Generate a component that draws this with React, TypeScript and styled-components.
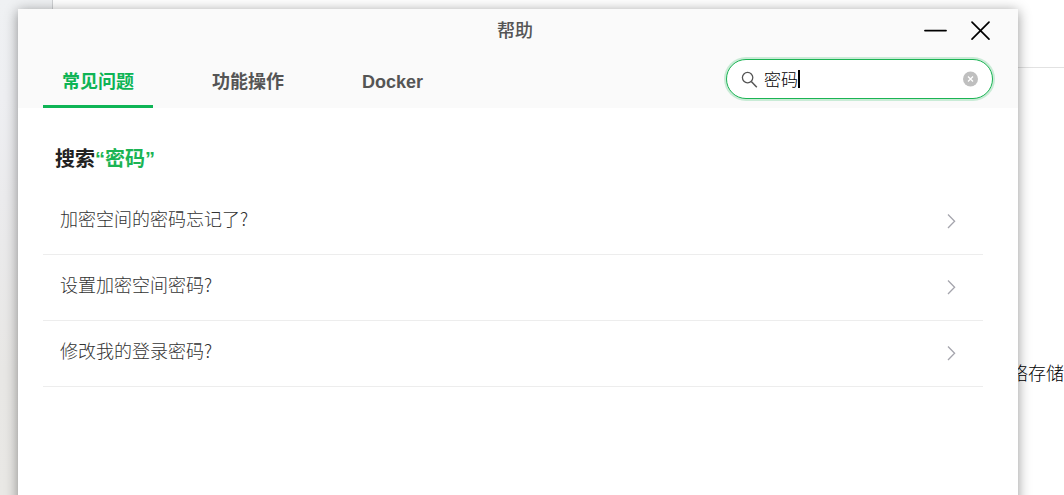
import React, { useState } from "react";
import styled, { createGlobalStyle } from "styled-components";

const GlobalStyle = createGlobalStyle`
  * { box-sizing: border-box; }
  body {
    margin: 0;
    overflow: hidden;
    font-family: "Liberation Sans", "Noto Sans CJK SC", sans-serif;
    font-size: 18px;
    line-height: 24px;
  }
  button, input { font: inherit; }
  button { padding: 0; border: 0; background: none; cursor: pointer; }
`;

const Desktop = styled.div`
  position: relative;
  display: flex;
  min-height: 100vh;
  overflow: hidden;
  background: #fff;
`;

const Dock = styled.aside`
  flex: none;
  width: 53px;
  border-right: 1px solid #cfd1d3;
  background: linear-gradient(#eff1f3, #eeeff2 20%, #ebebed 40%, #e8e7e5 75%, #e9e8e5);
`;

const Backdrop = styled.main`
  flex: 1;
  display: flex;
  flex-direction: column;
`;

const BackdropHeader = styled.header`
  height: 68px;
  border-bottom: 1px solid #e2e2e2;
`;

const BackdropText = styled.p`
  margin: 292px 0 0;
  text-align: right;
  font-family: "Noto Sans CJK SC", sans-serif;
  font-weight: 300;
  color: #000;
`;

const Dialog = styled.section`
  position: absolute;
  top: 9px;
  right: 46px;
  bottom: -20px;
  left: 18px;
  background: #fff;
  box-shadow: 0 2px 12px rgba(0, 0, 0, 0.42);
`;

const DialogHeader = styled.header`
  background: #fafafa;
`;

const TitleBar = styled.div`
  display: grid;
  grid-template-columns: 1fr auto 1fr;
  align-items: center;
  height: 44px;
  padding: 0 26px 0 20px;
`;

const Title = styled.h1`
  grid-column: 2;
  margin: 0;
  font-size: 18px;
  font-weight: 500;
  color: #555;
`;

const WindowControls = styled.div`
  display: flex;
  justify-content: flex-end;
  gap: 21px;
`;

const ControlButton = styled.button`
  display: flex;
  width: 24px;
  height: 24px;
  color: #000;
`;

const NavRow = styled.div`
  display: flex;
  justify-content: space-between;
  height: 55px;
  padding: 0 25px;
`;

const Tabs = styled.nav`
  display: flex;
  gap: 40px;
`;

const Tab = styled.button<{ $active: boolean }>`
  padding: 2px 19px 0;
  border-top: 3px solid transparent;
  border-bottom: 3px solid ${(p) => (p.$active ? "#0eb455" : "transparent")};
  font-weight: ${(p) => (p.$active ? 700 : 600)};
  color: ${(p) => (p.$active ? "#0eb455" : "#555")};
`;

const SearchBox = styled.label`
  display: flex;
  align-items: center;
  width: 267px;
  height: 40px;
  margin-top: 6px;
  padding: 0 14px;
  border: 1px solid #1bb454;
  border-radius: 20px;
  background: #fff;
  box-shadow: 0 0 0 2px #c9ebd6;
`;

const SearchInput = styled.input`
  field-sizing: content;
  max-width: 180px;
  margin-left: 6px;
  padding: 0;
  border: 0;
  outline: 0;
  background: none;
  font-family: "Noto Sans CJK SC", sans-serif;
  font-size: 17px;
  font-weight: 300;
  color: #000;
  caret-color: transparent;
`;

const Caret = styled.span`
  width: 2px;
  height: 18px;
  background: #000;
`;

const ClearButton = styled.button`
  display: flex;
  margin-left: auto;
`;

const Content = styled.div`
  padding: 38px 35px 24px 25px;
`;

const ResultTitle = styled.h2`
  margin: 0 0 17px 12px;
  font-size: 20px;
  line-height: 26px;
  font-weight: 700;
  color: #222;
`;

const Keyword = styled.span`
  color: #1bb454;
`;

const Results = styled.ul`
  margin: 0;
  padding: 0;
  list-style: none;
`;

const ResultLink = styled.a`
  display: flex;
  align-items: center;
  justify-content: space-between;
  height: 66px;
  padding: 0 27px 8px 17px;
  border-bottom: 1px solid #ededed;
  font-family: "Noto Sans CJK SC", sans-serif;
  font-weight: 300;
  color: #333;
  text-decoration: none;
`;

const Chevron = styled.svg`
  margin-top: 6px;
`;

const questions = ["加密空间的密码忘记了?", "设置加密空间密码?", "修改我的登录密码?"];
const tabs = ["常见问题", "功能操作", "Docker"];

export default function App() {
  const [active, setActive] = useState(0);
  const [query, setQuery] = useState("密码");

  return (
    <>
      <GlobalStyle />
      <Desktop>
        <Dock />
        <Backdrop>
          <BackdropHeader />
          <BackdropText>网络存储</BackdropText>
        </Backdrop>
        <Dialog role="dialog" aria-labelledby="help-title">
          <DialogHeader>
            <TitleBar>
              <Title id="help-title">帮助</Title>
              <WindowControls>
                <ControlButton aria-label="最小化">
                  <svg width="24" height="24" fill="none" stroke="currentColor" strokeWidth="1.8" strokeLinecap="round">
                    <path d="M2 11.6H23" />
                  </svg>
                </ControlButton>
                <ControlButton aria-label="关闭">
                  <svg width="24" height="24" fill="none" stroke="currentColor" strokeWidth="1.7" strokeLinecap="round">
                    <path d="M4 3.2L21 20.2M21 3.2L4 20.2" />
                  </svg>
                </ControlButton>
              </WindowControls>
            </TitleBar>
            <NavRow>
              <Tabs>
                {tabs.map((name, i) => (
                  <Tab key={name} $active={i === active} onClick={() => setActive(i)}>
                    {name}
                  </Tab>
                ))}
              </Tabs>
              <SearchBox>
                <svg width="17" height="18" viewBox="0 0 17 18" fill="none" stroke="#555" strokeWidth="1.3">
                  <circle cx="6.6" cy="7.6" r="5.2" />
                  <path d="M10.3 11.4L15.8 17.2" strokeWidth="1.5" />
                </svg>
                <SearchInput aria-label="搜索" value={query} onChange={(e) => setQuery(e.target.value)} />
                <Caret />
                <ClearButton aria-label="清除" onClick={() => setQuery("")}>
                  <svg width="15" height="16">
                    <circle cx="7.5" cy="8" r="7.5" fill="#bfbfbf" />
                    <path d="M5 5.5L10 10.5M10 5.5L5 10.5" stroke="#fff" strokeWidth="1.3" />
                  </svg>
                </ClearButton>
              </SearchBox>
            </NavRow>
          </DialogHeader>
          <Content>
            <ResultTitle>
              搜索<Keyword>“{query}”</Keyword>
            </ResultTitle>
            <Results>
              {questions.map((q) => (
                <li key={q}>
                  <ResultLink href="#">
                    {q}
                    <Chevron width="10" height="16" fill="none" stroke="#a5a5ad" strokeWidth="1.3">
                      <path d="M2 1.5L8.6 8.2L2 15" />
                    </Chevron>
                  </ResultLink>
                </li>
              ))}
            </Results>
          </Content>
        </Dialog>
      </Desktop>
    </>
  );
}
